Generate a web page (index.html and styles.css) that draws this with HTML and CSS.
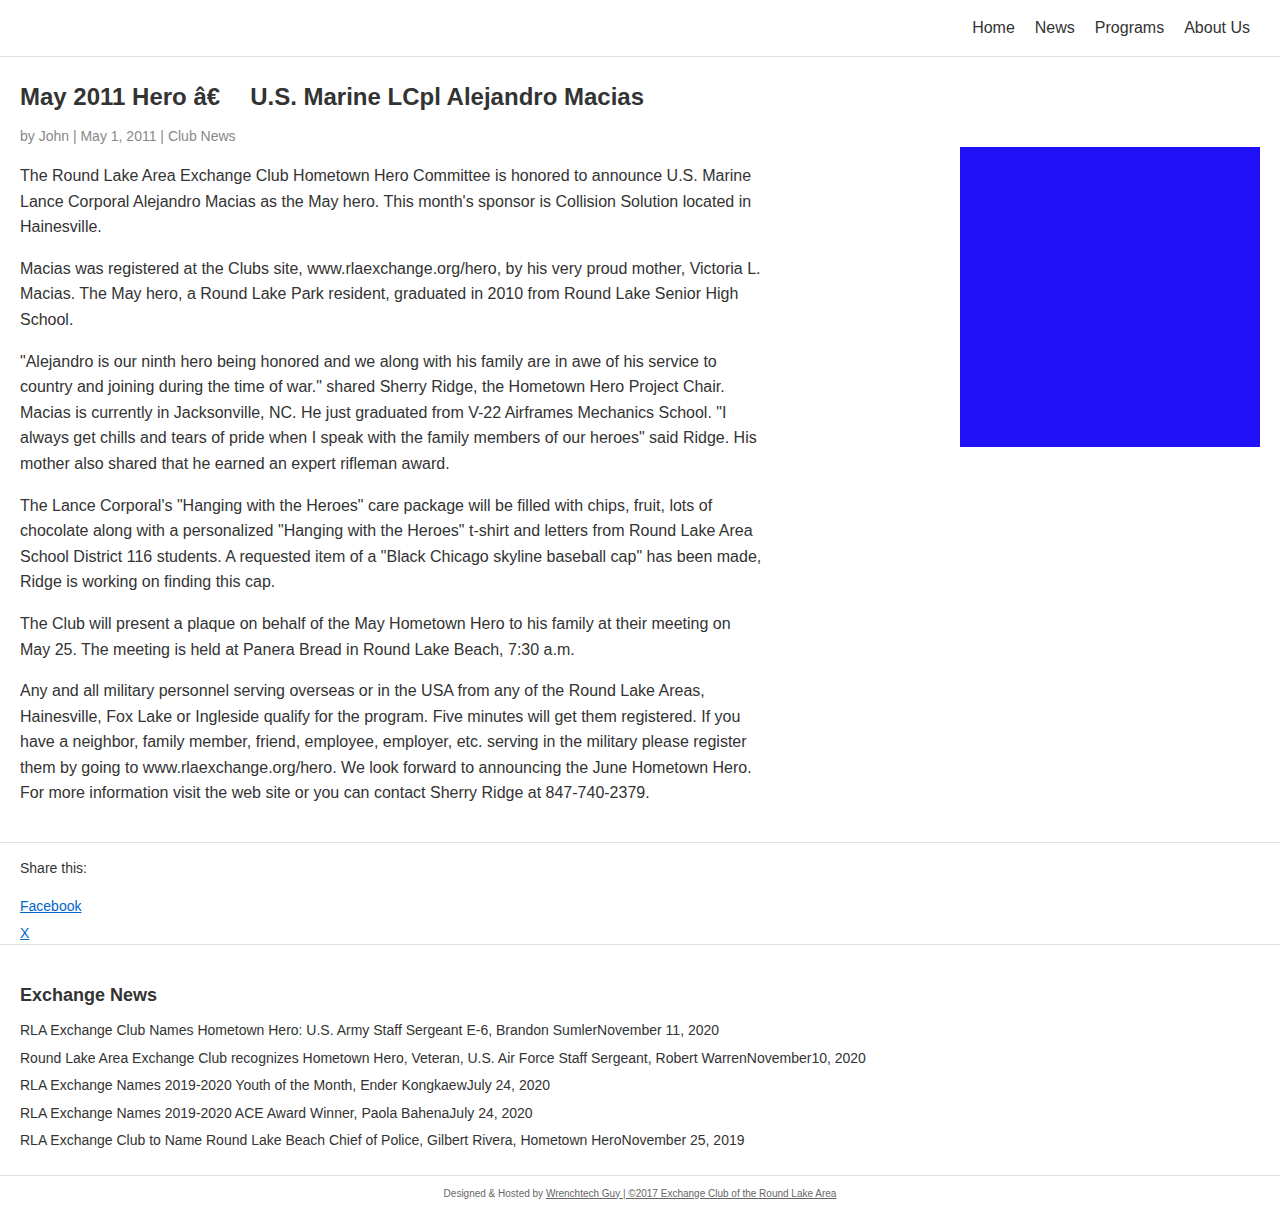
FILE: index.html
```html
<!DOCTYPE html>
<html>
<head>
<meta charset="utf-8">
<link rel="stylesheet" href="styles.css">
</head>
<body>
<header class="site-header">
  <nav class="nav">
    <a href="#">Home</a>
    <a href="#">News</a>
    <a href="#">Programs</a>
    <a href="#">About Us</a>
  </nav>
</header>
<div class="page">
  <article class="post">
    <h1 class="post-title">May 2011 Hero â€<span class="gap"></span>U.S. Marine LCpl Alejandro Macias</h1>
    <p class="meta">by John | May 1, 2011 | Club News</p>
    <div class="body">
      <p>The Round Lake Area Exchange Club Hometown Hero Committee is honored to announce U.S. Marine Lance Corporal Alejandro Macias as the May hero. This month's sponsor is Collision Solution located in Hainesville.</p>
      <p>Macias was registered at the Clubs site, www.rlaexchange.org/hero, by his very proud mother, Victoria L. Macias. The May hero, a Round Lake Park resident, graduated in 2010 from Round Lake Senior High School.</p>
      <p>"Alejandro is our ninth hero being honored and we along with his family are in awe of his service to country and joining during the time of war." shared Sherry Ridge, the Hometown Hero Project Chair. Macias is currently in Jacksonville, NC. He just graduated from V-22 Airframes Mechanics School. "I always get chills and tears of pride when I speak with the family members of our heroes" said Ridge. His mother also shared that he earned an expert rifleman award.</p>
      <p>The Lance Corporal's "Hanging with the Heroes" care package will be filled with chips, fruit, lots of chocolate along with a personalized "Hanging with the Heroes" t-shirt and letters from Round Lake Area School District 116 students. A requested item of a "Black Chicago skyline baseball cap" has been made, Ridge is working on finding this cap.</p>
      <p>The Club will present a plaque on behalf of the May Hometown Hero to his family at their meeting on May 25. The meeting is held at Panera Bread in Round Lake Beach, 7:30 a.m.</p>
      <p>Any and all military personnel serving overseas or in the USA from any of the Round Lake Areas, Hainesville, Fox Lake or Ingleside qualify for the program. Five minutes will get them registered. If you have a neighbor, family member, friend, employee, employer, etc. serving in the military please register them by going to www.rlaexchange.org/hero. We look forward to announcing the June Hometown Hero. For more information visit the web site or you can contact Sherry Ridge at 847-740-2379.</p>
    </div>
  </article>
  <aside class="sidebar">
    <div class="ad-box"></div>
  </aside>
</div>
<section class="share">
  <p class="share-title">Share this:</p>
  <ul class="share-list">
    <li><a href="#">Facebook</a></li>
    <li><a href="#">X</a></li>
  </ul>
</section>
<section class="news">
  <h2 class="news-title">Exchange News</h2>
  <ul class="news-list">
    <li>RLA Exchange Club Names Hometown Hero: U.S. Army Staff Sergeant E-6, Brandon SumlerNovember 11, 2020</li>
    <li>Round Lake Area Exchange Club recognizes Hometown Hero, Veteran, U.S. Air Force Staff Sergeant, Robert WarrenNovember10, 2020</li>
    <li>RLA Exchange Names 2019-2020 Youth of the Month, Ender KongkaewJuly 24, 2020</li>
    <li>RLA Exchange Names 2019-2020 ACE Award Winner, Paola BahenaJuly 24, 2020</li>
    <li>RLA Exchange Club to Name Round Lake Beach Chief of Police, Gilbert Rivera, Hometown HeroNovember 25, 2019</li>
  </ul>
</section>
<footer class="footer">
  Designed &amp; Hosted by <a href="#">Wrenchtech Guy | ©2017 Exchange Club of the Round Lake Area</a>
</footer>
</body>
</html>
```

FILE: styles.css
```css
* { box-sizing: border-box; }
html, body { margin: 0; padding: 0; }
body {
  font-family: "Liberation Sans", Arial, sans-serif;
  color: #333;
  background: #fff;
}
.site-header {
  height: 57px;
  border-bottom: 1px solid #e2e2e2;
  display: flex;
  justify-content: flex-end;
  align-items: center;
  padding: 0 30px 0 0;
}
.nav { display: flex; gap: 20px; }
.nav a {
  color: #333;
  text-decoration: none;
  font-size: 16px;
}
.page {
  display: flex;
  justify-content: space-between;
  padding: 0 20px 0 20px;
}
.post { width: 745px; padding-top: 25px; }
.post-title {
  font-size: 24px;
  font-weight: bold;
  margin: 0;
  line-height: 29px;
  color: #333;
}
.gap { display: inline-block; width: 30px; }
.meta {
  margin: 15px 0 0;
  font-size: 14px;
  color: #888;
  line-height: 20px;
}
.body { margin-top: 17px; }
.body p {
  font-size: 16px;
  line-height: 25.6px;
  margin: 0 0 16px;
}
.sidebar { padding-top: 90px; }
.ad-box { width: 300px; height: 300px; background: #1f10f6; }
.share {
  border-top: 1px solid #e2e2e2;
  border-bottom: 1px solid #e2e2e2;
  margin-top: 20px;
  padding: 16px 20px 0;
}
.share-title { margin: 0; font-size: 14px; line-height: 18px; }
.share-list { list-style: none; margin: 18px 0 0; padding: 0; }
.share-list li { font-size: 14px; line-height: 22px; }
.share-list li + li { margin-top: 5px; }
.share-list a { color: #0066cc; }
.news { padding: 37px 20px 20px; }
.news-title { margin: 0 0 9px; font-size: 18px; line-height: 26px; font-weight: bold; }
.news-list { list-style: none; margin: 0; padding: 0; }
.news-list li { font-size: 14px; line-height: 27.5px; }
.footer {
  border-top: 1px solid #e2e2e2;
  text-align: center;
  font-size: 10px;
  color: #666;
  padding: 12px 0 14px;
}
.footer a { color: #666; }
```
